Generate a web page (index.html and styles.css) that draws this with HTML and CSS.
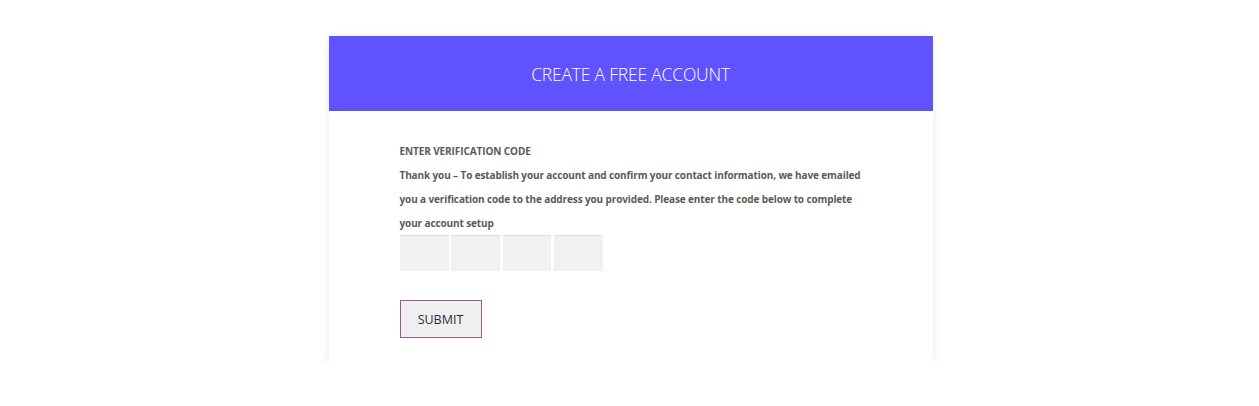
FILE: index.html
```html
<!DOCTYPE html>
<html>
<head>
<meta charset="utf-8">
<link rel="stylesheet" href="styles.css">
</head>
<body>
<div class="page">
  <div class="card">
    <div class="card-header">CREATE A FREE ACCOUNT</div>
    <div class="card-body">
      <div class="label">ENTER VERIFICATION CODE</div>
      <p class="desc">Thank you – To establish your account and confirm your contact information, we have emailed you a verification code to the address you provided. Please enter the code below to complete your account setup</p>
      <div class="code-row">
        <input class="code" type="text" maxlength="1">
        <input class="code" type="text" maxlength="1">
        <input class="code narrow" type="text" maxlength="1">
        <input class="code" type="text" maxlength="1">
      </div>
      <button class="submit" type="button">SUBMIT</button>
    </div>
  </div>
</div>
</body>
</html>
```

FILE: styles.css
```css
html, body {
  margin: 0;
  padding: 0;
  background: #ffffff;
}
body {
  font-family: "Open Sans", "Noto Sans", sans-serif;
}
.page {
  display: flex;
  justify-content: center;
  padding-top: 36px;
  padding-left: 2px;
}
.card {
  width: 604px;
  background: #fff;
  box-shadow: 0 3px 10px rgba(0, 0, 0, 0.09);
}
.card-header {
  height: 75px;
  background: #6152ff;
  color: #fff;
  display: flex;
  align-items: center;
  justify-content: center;
  font-size: 17.5px;
  font-weight: 300;
  letter-spacing: -0.2px;
}
.card-body {
  padding: 31px 71px 24px 71px;
}
.label {
  font-size: 10px;
  font-weight: 700;
  color: #5a5a5a;
  line-height: 18px;
  letter-spacing: -0.1px;
}
.desc {
  margin: 3px 0 0 0;
  font-size: 10px;
  font-weight: 700;
  color: #5a5a5a;
  line-height: 24px;
  width: 470px;
  letter-spacing: -0.12px;
}
.code-row {
  display: flex;
  gap: 2px;
  margin-top: 0;
}
.code {
  box-sizing: border-box;
  width: 49px;
  height: 36px;
  margin: 0;
  padding: 0;
  border: none;
  border-top: 1px solid #dedede;
  background: #f1f1f1;
  outline: none;
}
.code.narrow {
  width: 48px;
  margin: 0 1px;
}
.submit {
  margin-top: 29px;
  box-sizing: border-box;
  width: 82px;
  height: 38px;
  background: #efefef;
  border: 1px solid #9a5a94;
  color: #2a2a3a;
  font-family: "Open Sans", "Noto Sans", sans-serif;
  font-size: 12.5px;
  padding: 0;
  display: block;
}
```
